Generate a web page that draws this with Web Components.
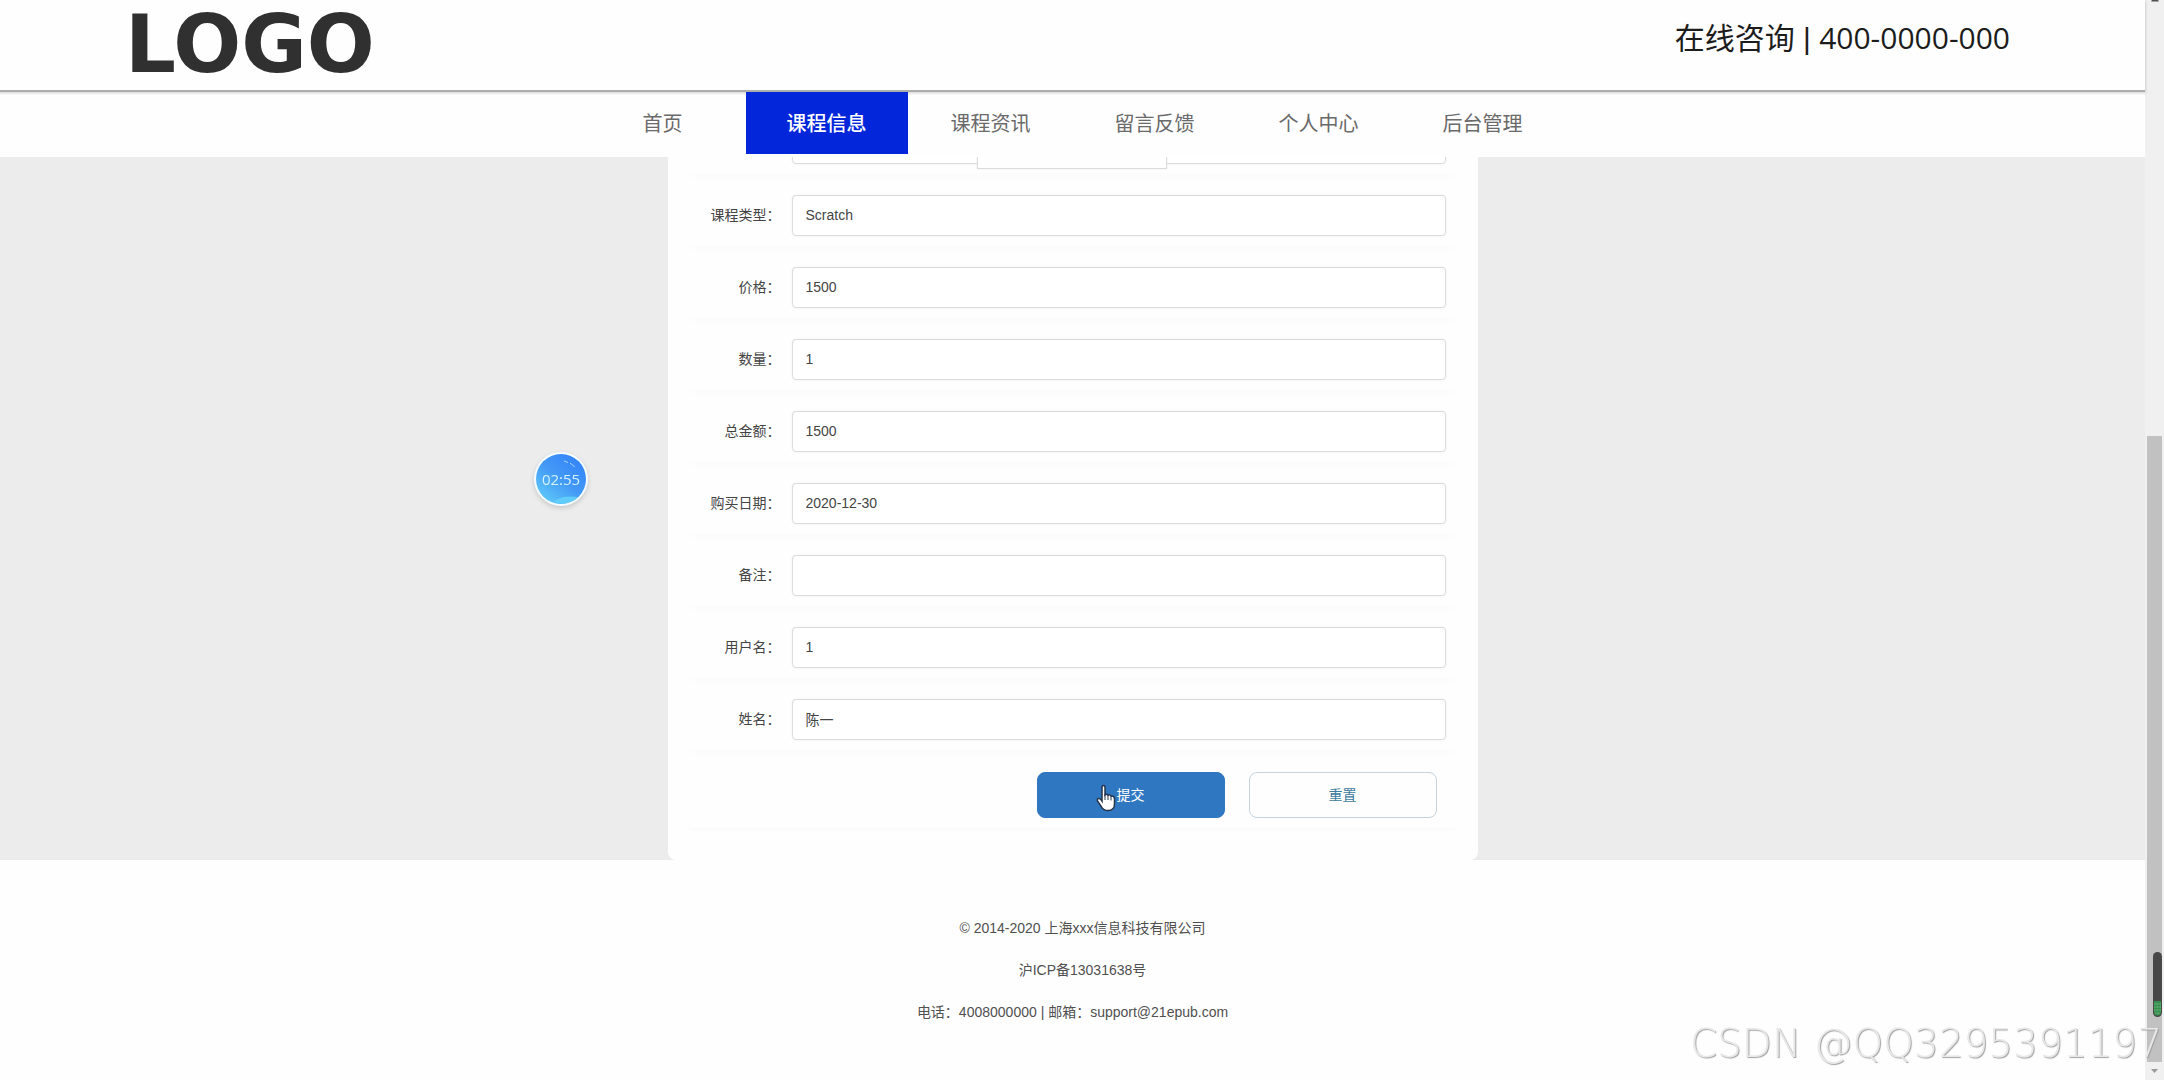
<!DOCTYPE html>
<html lang="zh-CN">
<head>
<meta charset="utf-8">
<title>课程信息</title>
<style>
  html, body { margin: 0; height: 100%; }
  body {
    overflow: hidden;
    background: #fefefe;
    color: #444;
    font: 14px/20px "Liberation Sans", "Noto Sans CJK SC", sans-serif;
  }
</style>
</head>
<body>
<course-app></course-app>

<script>
const define = (name, html, setup) => {
  const template = document.createElement('template');
  template.innerHTML = html;
  customElements.define(name, class extends HTMLElement {
    constructor() {
      super();
      this.attachShadow({ mode: 'open' }).append(template.content.cloneNode(true));
    }
    connectedCallback() { if (setup) setup(this, this.shadowRoot); }
  });
};

define('site-header', `
  <style>
    :host {
      display: flex; justify-content: space-between; align-items: center;
      box-sizing: border-box; height: 92px; padding: 0 135px 0 125px;
      background: #fefefe; border-bottom: 2px solid #adadad;
      box-shadow: 0 1px 3px rgba(0,0,0,.25);
      position: relative; z-index: 2;
    }
    .logo { font: bold 80px/90px "DejaVu Sans", sans-serif; color: #303030; text-decoration: none; }
    .phone { font: 30px/36px "Open Sans", "Noto Sans CJK SC", sans-serif; color: #1c1c1c; padding-bottom: 14px; }
    ::slotted(span) { font-family: "Liberation Sans", sans-serif; }
  </style>
  <a class="logo" href="#">LOGO</a>
  <div class="phone"><slot></slot></div>`);

define('nav-item', `
  <style>
    :host { display: block; width: 162px; }
    a {
      display: block; text-align: center; text-decoration: none;
      font: 20px/62px "Noto Sans CJK SC", sans-serif; color: #6a6a6a;
    }
    :host([active]) a { background: #0426da; color: #fff; font-weight: 500; }
  </style>
  <a href="#"><slot></slot></a>`);

define('site-nav', `
  <style>
    :host { display: flex; justify-content: center; gap: 2px; padding-bottom: 3px; background: #fefefe; position: relative; z-index: 3; }
    :host::before { content: ""; position: absolute; inset: 0 0 auto; height: 3px; z-index: 0; background: linear-gradient(#dadada, #fefefe); }
    ::slotted(*) { position: relative; }
  </style>
  <slot></slot>`);

define('form-row', `
  <style>
    :host {
      display: flex; align-items: center; gap: 11px;
      box-sizing: border-box; height: 60px; margin-bottom: 12px; padding: 0 11px 0 0;
      position: relative; background: #fefefe; border-radius: 4px;
      box-shadow: 0 7px 6px -1px rgba(0,0,0,.012);
    }
    label { width: 93px; text-align: right; white-space: nowrap; }
    input {
      flex: 1; min-width: 0; box-sizing: border-box; height: 41px; padding: 0 13px;
      font: inherit; color: #444; background: #fff;
      border: 1px solid #dcdcdc; border-radius: 4px; outline: none;
      box-shadow: 0 0 2px rgba(0,0,0,.08);
    }
  </style>
  <label for="field"></label>
  <input id="field" type="text">
  <slot></slot>`, (host, root) => {
    root.querySelector('label').textContent = host.getAttribute('label') || '';
    root.querySelector('input').setAttribute('value', host.getAttribute('value') || '');
  });

define('image-preview', `
  <style>
    :host {
      display: block; box-sizing: border-box; width: 190px; height: 52px;
      position: absolute; left: 289px; bottom: 4px;
      background: #fefefe; border: 1px solid #dcdcdc;
      box-shadow: 0 0 2px rgba(0,0,0,.08);
    }
  </style>`);

define('form-actions', `
  <style>
    :host {
      display: flex; justify-content: flex-end; gap: 24px; padding: 11px 20px 10px 0;
      background: #fefefe; border-radius: 4px; box-shadow: 0 3px 4px -1px rgba(0,0,0,.02);
      position: relative;
    }
    button {
      box-sizing: border-box; width: 188px; height: 46px; border-radius: 8px; padding: 0 0 2px;
      font: 14px/20px "Noto Sans CJK SC", sans-serif;
      border: 1px solid #3077c2; background: #3077c2; color: #fff;
    }
    button[type=reset] { background: #fefefe; color: #3c7a9d; border-color: #c4d3de; }
  </style>
  <button type="submit">提交</button>
  <button type="reset">重置</button>`);

define('order-form', `
  <style>
    :host {
      display: block; box-sizing: border-box; width: 810px; margin: -44px auto 0;
      padding: 0 21px 32px 20px; background: #fefefe; border-radius: 8px;
    }
    form { margin: 0; }
  </style>
  <form>
    <form-row><image-preview></image-preview></form-row>
    <form-row label="课程类型：" value="Scratch"></form-row>
    <form-row label="价格：" value="1500"></form-row>
    <form-row label="数量：" value="1"></form-row>
    <form-row label="总金额：" value="1500"></form-row>
    <form-row label="购买日期：" value="2020-12-30"></form-row>
    <form-row label="备注："></form-row>
    <form-row label="用户名：" value="1"></form-row>
    <form-row label="姓名：" value="陈一"></form-row>
    <form-actions></form-actions>
  </form>`);

define('site-footer', `
  <style>
    :host { display: block; padding: 47px 0; background: #fefefe; text-align: center; line-height: 42px; color: #505050; }
    p { margin: 0; }
    .legal { padding-left: 20px; }
  </style>
  <p class="legal">© 2014-2020 上海xxx信息科技有限公司</p>
  <p class="legal">沪ICP备13031638号</p>
  <p>电话：4008000000 | 邮箱：support@21epub.com</p>`);

define('page-scrollbar', `
  <style>
    :host { display: flex; flex-direction: column; width: 19px; background: #f0f0f0; }
    svg { display: block; flex: none; }
    .track { flex: 1; display: flex; flex-direction: column; padding: 0 2px; }
    .space { flex: 432; }
    .thumb { flex: 626; background: #c1c1c1; }
  </style>
  <svg width="19" height="4" viewBox="0 0 19 4"><path d="M7 0h6l1 1.500H6z" fill="#505050"/></svg>
  <div class="track"><div class="space"></div><div class="thumb"></div></div>
  <svg width="19" height="18" viewBox="0 0 19 18"><path d="M6 7h7l-3.500 4z" fill="#999"/></svg>`);

define('level-meter', `
  <style>
    :host { display: block; position: fixed; right: 2px; bottom: 63px; }
    svg { display: block; }
  </style>
  <svg width="9" height="65" viewBox="0 0 9 65">
    <rect width="9" height="65" rx="4.500" fill="#484848"/>
    <path d="M1 49h7v11a3.500 3.500 0 0 1-7 0z" fill="#399451"/>
    <path d="M1 52h7M1 55h7M1 58h7M2 61h5" stroke="#70b981"/>
    <path d="M3 49v13M6 49v13" stroke="#2c7440" stroke-width=".5"/>
  </svg>`);

define('record-timer', `
  <style>
    :host {
      display: grid; place-items: center; position: fixed; left: 534px; top: 452px;
      width: 54px; height: 54px; border-radius: 50%;
      background: #f4fcff; box-shadow: 0 2px 5px rgba(0,0,0,.16);
      font: 15px/20px "Open Sans", sans-serif; color: #d3f1ff;
    }
    svg, span { grid-area: 1 / 1; }
    span { position: relative; }
  </style>
  <svg width="50" height="50" viewBox="0 0 50 50">
    <defs><linearGradient id="g" x1=".85" y1=".1" x2=".2" y2=".9">
      <stop offset="0" stop-color="#3485f9"/><stop offset=".5" stop-color="#4398f6"/><stop offset="1" stop-color="#5bc3f8"/>
    </linearGradient></defs>
    <circle cx="25" cy="25" r="25" fill="url(#g)"/>
    <path d="M17 48q9-7 25-5a25 25 0 0 1-25 5z" fill="#61cdfa"/>
    <path d="M28 7l4 1.500M34 9l5 4" stroke="#a6d0ff" fill="none"/>
  </svg>
  <span><slot></slot></span>`);

define('hand-cursor', `
  <style>
    :host { display: block; position: fixed; left: 1096px; top: 784px; }
    svg { display: block; }
  </style>
  <svg width="20" height="28" viewBox="0 0 20 28">
    <path d="M6 3.500Q6 1.500 7.500 1.500T9 3.500V11Q10.500 9.500 12 11.300 13.800 10 15 12.200 18.500 11.500 18.500 15V20Q18.500 26.500 12 26.500 7.500 26.500 5.500 23L1.500 17Q0.800 15 2.500 14.500T6 17z" fill="#fff" stroke="#26364a" stroke-width="1.500"/>
    <path d="M9 10v6M12 11.500V16M15 12.500V16.500" stroke="#26364a"/>
  </svg>`);

define('water-mark', `
  <style>
    :host {
      display: block; position: fixed; right: 2px; bottom: 12px; white-space: nowrap;
      font: 200 39px/48px "DejaVu Sans", sans-serif; color: #e8e8e8;
      text-shadow: 1px 1px 1px #a0a0a0;
    }
  </style>
  <slot></slot>`);

define('course-app', `
  <style>
    :host { display: flex; min-height: 100%; }
    .page { flex: 1; min-width: 0; }
    main { background: #ececec; overflow: clip; display: flow-root; }
  </style>
  <div class="page">
    <site-header>在线咨询<span> | </span>400-0000-000</site-header>
    <site-nav>
      <nav-item>首页</nav-item>
      <nav-item active>课程信息</nav-item>
      <nav-item>课程资讯</nav-item>
      <nav-item>留言反馈</nav-item>
      <nav-item>个人中心</nav-item>
      <nav-item>后台管理</nav-item>
    </site-nav>
    <main><order-form></order-form></main>
    <site-footer></site-footer>
  </div>
  <page-scrollbar></page-scrollbar>
  <record-timer>02:55</record-timer>
  <hand-cursor></hand-cursor>
  <level-meter></level-meter>
  <water-mark>CSDN @QQ3295391197</water-mark>`);
</script>
</body>
</html>
